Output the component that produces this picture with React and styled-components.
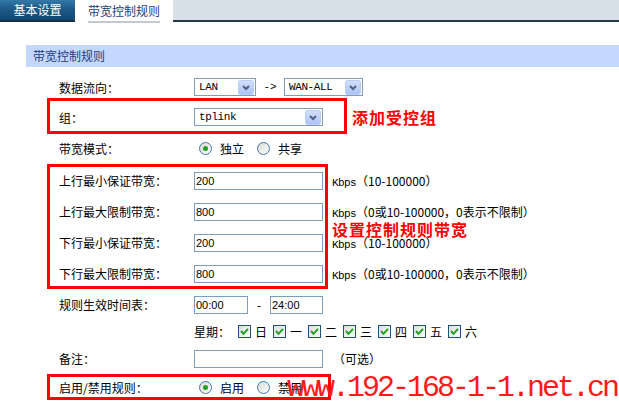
import React from 'react';
import styled, { createGlobalStyle } from 'styled-components';

const Global = createGlobalStyle`
  html, body { margin: 0; padding: 0; background: #fff; overflow: hidden; }
  body {
    font-family: "Noto Sans CJK SC", "Liberation Sans", sans-serif;
    font-size: 12px;
    color: #000;
  }
`;

const Page = styled.div`
  position: relative;
  width: 619px;
  height: 405px;
  overflow: hidden;
  background: #fff;
`;

const TabBar = styled.div`
  display: flex;
  height: 22px;
  align-items: stretch;
`;

const Tab = styled.div`
  box-sizing: border-box;
  width: ${p => p.$w}px;
  display: flex;
  justify-content: center;
  padding-top: 3px;
  line-height: 14px;
  color: ${p => (p.$active ? '#1e3d7a' : '#fff')};
  background: ${p =>
    p.$active ? '#fff' : 'linear-gradient(#3479a8 0%, #1d5a88 45%, #124873 100%)'};
  border-bottom: ${p => (p.$active ? 'none' : '2px solid #17303f')};
  margin-top: ${p => (p.$active ? '1px' : '0')};
`;

const TabText = styled.span`
  display: block;
  height: 17px;
  border-bottom: ${p => (p.$underline ? '2px solid #c3cace' : 'none')};
`;

const TabFiller = styled.div`
  flex: 1;
  background: #d8e0ea;
  border-bottom: 2px solid #22394a;
`;

const SectionHeader = styled.div`
  margin: 23px 0 0 26px;
  height: 22px;
  line-height: 22px;
  padding-left: 7px;
  background: #c4d8fd;
  color: #1d3b83;
`;

const Form = styled.div`
  margin-left: 26px;
  padding-top: 5px;
`;

const Row = styled.div`
  display: flex;
  align-items: center;
  height: ${p => p.$h}px;
  padding-left: 33px;
`;

const Label = styled.div`
  width: 135px;
  flex: none;
  white-space: nowrap;
`;

const Marked = styled.div`
  position: relative;
  &::after {
    content: '';
    position: absolute;
    pointer-events: none;
    left: 21px;
    width: ${p => p.$w}px;
    top: ${p => p.$t}px;
    bottom: ${p => p.$b}px;
    box-sizing: border-box;
    border: 3px solid #ff0000;
  }
`;

const SelectBox = styled.div`
  box-sizing: border-box;
  width: ${p => p.$w}px;
  height: 18px;
  display: flex;
  align-items: center;
  justify-content: space-between;
  border: 1px solid #7f9db9;
  background: #fff;
  padding: 0 1px 0 4px;
  font-family: "Liberation Mono", monospace;
  font-size: 11px;
  letter-spacing: -0.4px;
  flex: none;
`;

const ArrowText = styled.span`
  width: 28px;
  text-align: center;
  font-family: "Liberation Mono", monospace;
  font-size: 11px;
  flex: none;
`;

const TextBox = styled.input`
  box-sizing: border-box;
  width: ${p => p.$w}px;
  height: 18px;
  border: 1px solid #7f9db9;
  padding: 0 0 0 1px;
  margin: 0;
  font-family: "Liberation Sans", sans-serif;
  font-size: 11px;
  color: #000;
  background: #fff;
  outline: none;
  flex: none;
`;

const Hint = styled.span`
  margin-left: ${p => p.$ml || 9}px;
  white-space: nowrap;
  font-size: 12px;
`;

const Kbps = styled.span`
  font-family: "Liberation Mono", monospace;
  font-size: 11px;
  letter-spacing: -0.6px;
`;

const Note = styled.span`
  color: #ff0000;
  font-weight: bold;
  font-size: 16px;
  letter-spacing: 1px;
  white-space: nowrap;
  margin-left: ${p => p.$ml || 0}px;
`;

const FloatNote = styled(Note)`
  position: absolute;
  left: 306px;
  top: 52px;
  z-index: 2;
`;

const Choice = styled.label`
  display: flex;
  align-items: center;
  gap: 8px;
  margin-left: ${p => p.$ml}px;
`;

const Dash = styled.span`
  width: 22px;
  text-align: center;
  flex: none;
`;

const Week = styled.div`
  display: flex;
  align-items: center;
`;

const Day = styled.label`
  display: flex;
  align-items: center;
  gap: 4px;
  margin-left: ${p => p.$ml}px;
`;

const Watermark = styled.div`
  position: absolute;
  left: 287px;
  top: 373px;
  font-family: "Liberation Mono", monospace;
  font-size: 30px;
  line-height: 30px;
  letter-spacing: -3px;
  color: #ff1a1a;
  white-space: nowrap;
  z-index: 3;
`;

const Arrow = () => (
  <svg width="16" height="15" viewBox="0 0 16 15">
    <defs>
      <linearGradient id="ab" x1="0" y1="0" x2="0" y2="1">
        <stop offset="0" stopColor="#d3e0fd" />
        <stop offset="1" stopColor="#adc2f4" />
      </linearGradient>
    </defs>
    <rect x="0.5" y="0.5" width="15" height="14" rx="2" fill="url(#ab)" stroke="#b9ccf6" />
    <path d="M5 6 L8 9 L11 6" fill="none" stroke="#4d6185" strokeWidth="2" />
  </svg>
);

const Select = ({ w, children }) => (
  <SelectBox $w={w}>
    <span>{children}</span>
    <Arrow />
  </SelectBox>
);

const Radio = ({ checked }) => (
  <svg width="13" height="13" viewBox="0 0 13 13">
    <defs>
      <linearGradient id="rg" x1="0" y1="0" x2="1" y2="1">
        <stop offset="0" stopColor="#d8d8d2" />
        <stop offset="1" stopColor="#ffffff" />
      </linearGradient>
    </defs>
    <circle cx="6.5" cy="6.5" r="6" fill="url(#rg)" stroke="#4a74a4" />
    {checked && <circle cx="6.5" cy="6.5" r="2.5" fill="#21a121" />}
  </svg>
);

const Check = () => (
  <svg width="13" height="13" viewBox="0 0 13 13">
    <defs>
      <linearGradient id="cg" x1="0" y1="0" x2="1" y2="1">
        <stop offset="0" stopColor="#dcdcd7" />
        <stop offset="1" stopColor="#ffffff" />
      </linearGradient>
    </defs>
    <rect x="0.5" y="0.5" width="12" height="12" fill="url(#cg)" stroke="#1c5180" />
    <path d="M3 6 L5.5 8.8 L10 3.8" fill="none" stroke="#21a121" strokeWidth="2" />
  </svg>
);

const days = ['日', '一', '二', '三', '四', '五', '六'];

const bwRows = [
  { label: '上行最小保证带宽：', value: '200', hint: 'Kbps（10-100000）' },
  { label: '上行最大限制带宽：', value: '800', hint: 'Kbps（0或10-100000，0表示不限制）' },
  { label: '下行最小保证带宽：', value: '200', hint: 'Kbps（10-100000）' },
  { label: '下行最大限制带宽：', value: '800', hint: 'Kbps（0或10-100000，0表示不限制）' },
];

const renderHint = h => {
  const m = h.match(/^(Kbps)(.*)$/);
  return (
    <>
      <Kbps>{m[1]}</Kbps>
      {m[2]}
    </>
  );
};

export default function App() {
  return (
    <Page>
      <Global />
      <TabBar>
        <Tab $w={75}>
          <TabText>基本设置</TabText>
        </Tab>
        <Tab $w={98} $active>
          <TabText $underline>带宽控制规则</TabText>
        </Tab>
        <TabFiller />
      </TabBar>

      <SectionHeader>带宽控制规则</SectionHeader>

      <Form>
        <Row $h={30}>
          <Label>数据流向：</Label>
          <Select w={62}>LAN</Select>
          <ArrowText>-&gt;</ArrowText>
          <Select w={79}>WAN-ALL</Select>
        </Row>

        <Marked $w={300} $t={-4} $b={-2}>
          <Row $h={30}>
            <Label>组：</Label>
            <Select w={129}>tplink</Select>
            <Note $ml={29}>添加受控组</Note>
          </Row>
        </Marked>

        <Row $h={33}>
          <Label>带宽模式：</Label>
          <Choice $ml={5}>
            <Radio checked />
            独立
          </Choice>
          <Choice $ml={13}>
            <Radio />
            共享
          </Choice>
        </Row>

        <Marked $w={281} $t={-1} $b={0}>
          {bwRows.map((r, i) => (
            <Row $h={31} key={i}>
              <Label>{r.label}</Label>
              <TextBox $w={129} defaultValue={r.value} readOnly />
              <Hint>{renderHint(r.hint)}</Hint>
            </Row>
          ))}
          <FloatNote>设置控制规则带宽</FloatNote>
        </Marked>

        <Row $h={31}>
          <Label>规则生效时间表：</Label>
          <TextBox $w={54} defaultValue="00:00" readOnly />
          <Dash>-</Dash>
          <TextBox $w={53} defaultValue="24:00" readOnly />
        </Row>

        <Row $h={22}>
          <Label />
          <Week>
            <span>星期：</span>
            {days.map((d, i) => (
              <Day key={d} $ml={i === 0 ? 8 : 6}>
                <Check />
                {d}
              </Day>
            ))}
          </Week>
        </Row>

        <Row $h={33}>
          <Label>备注：</Label>
          <TextBox $w={129} defaultValue="" readOnly />
          <Hint $ml={10}>（可选）</Hint>
        </Row>

        <Marked $w={284} $t={-1} $b={0}>
          <Row $h={25}>
            <Label>启用/禁用规则：</Label>
            <Choice $ml={5}>
              <Radio checked />
              启用
            </Choice>
            <Choice $ml={13}>
              <Radio />
              禁用
            </Choice>
          </Row>
        </Marked>
      </Form>

      <Watermark>www.192-168-1-1.net.cn</Watermark>
    </Page>
  );
}
